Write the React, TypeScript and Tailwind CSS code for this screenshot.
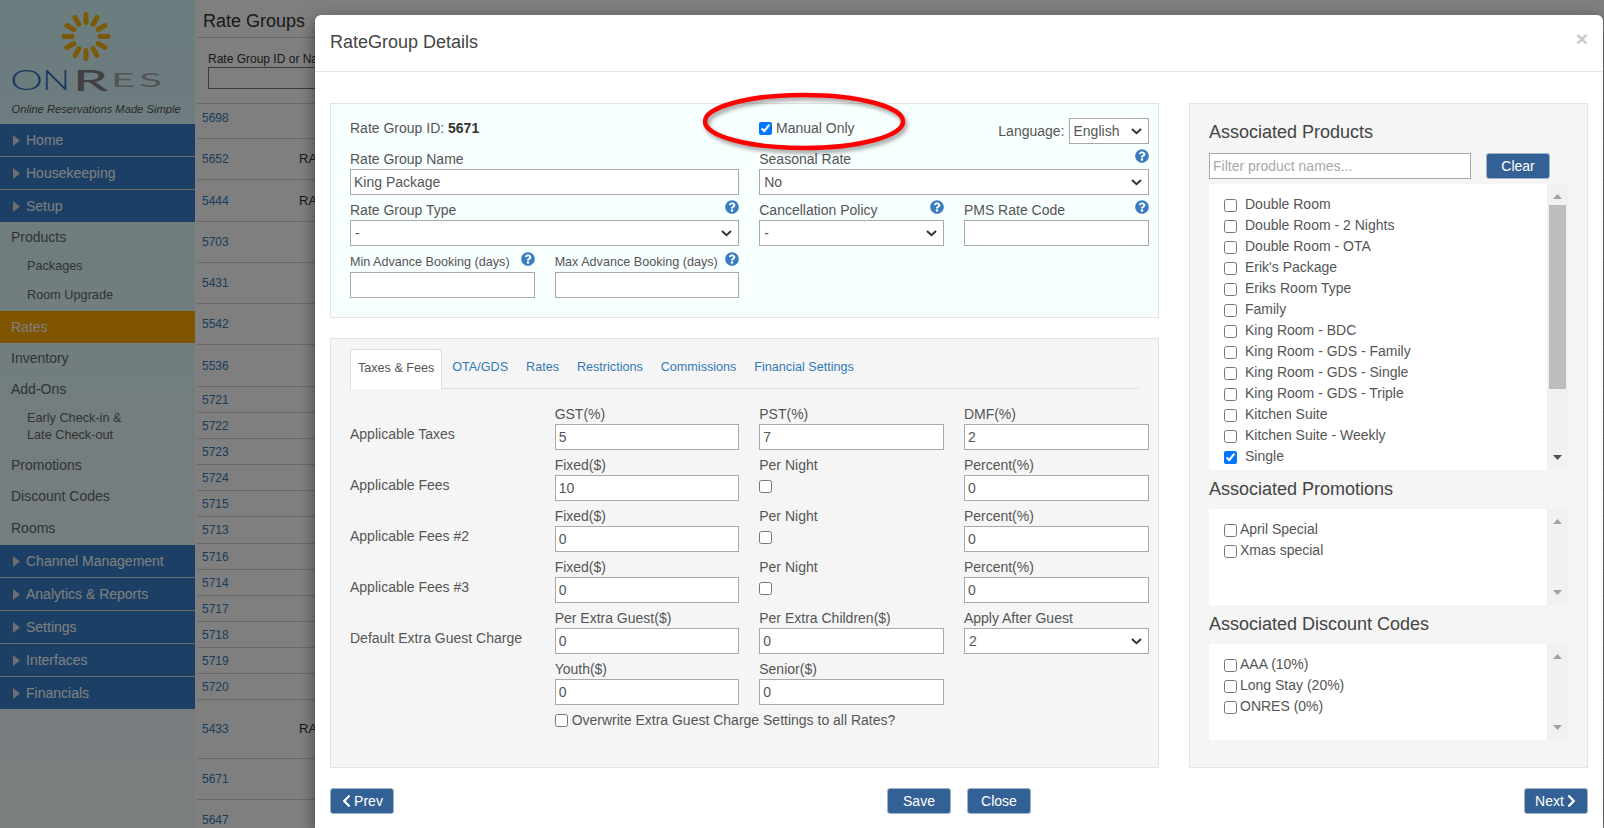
import React from "react";
import { FaChevronLeft, FaChevronRight, FaQuestionCircle } from "react-icons/fa";

const inputCls = "block h-[26px] border border-[#a9a9a9] bg-white px-[3px] text-[14px] text-[#555] outline-none";
const btnCls = "inline-flex h-[26px] w-[64px] items-center justify-center gap-[2px] rounded-[3px] border border-[#9fb2c7] bg-[#336195] text-[14px] text-white";

function Help() {
  return <FaQuestionCircle className="mb-[6px] h-[14px] w-[14px] shrink-0 text-[#3b7bbf]" />;
}

function Label({ text, help, small }: { text: string; help?: boolean; small?: boolean }) {
  return (
    <div className={`flex h-[25px] items-end justify-between whitespace-nowrap leading-[20px] ${small ? "text-[12.6px]" : ""}`}>
      <span>{text}</span>
      {help ? <Help /> : null}
    </div>
  );
}

function TextField({ label, value, help, small }: { label: string; value?: string; help?: boolean; small?: boolean }) {
  return (
    <div>
      <Label text={label} help={help} small={small} />
      <input className={`${inputCls} w-full`} defaultValue={value ?? ""} />
    </div>
  );
}

function NativeSelect({ value, options, width }: { value: string; options?: string[]; width: string }) {
  return (
    <div className={`relative ${width}`}>
      <select className="block h-[26px] w-full appearance-none border border-[#a9a9a9] bg-white pl-[4px] text-[14px] text-[#555] outline-none" defaultValue={value}>
        {(options ?? [value]).map((o) => (
          <option key={o}>{o}</option>
        ))}
      </select>
      <svg width="11" height="7" viewBox="0 0 11 7" className="pointer-events-none absolute right-[7px] top-[10px]">
        <polyline points="1,1 5.5,5.2 10,1" fill="none" stroke="#333" strokeWidth="2" />
      </svg>
    </div>
  );
}

function SelectField({ label, value, help, options }: { label: string; value: string; help?: boolean; options?: string[] }) {
  return (
    <div>
      <Label text={label} help={help} />
      <NativeSelect value={value} options={options} width="w-full" />
    </div>
  );
}

function CheckField({ label }: { label: string }) {
  return (
    <div>
      <Label text={label} />
      <div className="flex h-[26px] items-center pb-[3px]">
        <input type="checkbox" />
      </div>
    </div>
  );
}

function RowTitle({ text }: { text: string }) {
  return <div className="flex h-[51px] items-end pb-[6px] leading-[20px]">{text}</div>;
}

function Arrow({ up, dark }: { up?: boolean; dark?: boolean }) {
  return (
    <svg width="9" height="5" viewBox="0 0 9 5" className="shrink-0">
      <polygon points={up ? "4.5,0 9,5 0,5" : "0,0 9,0 4.5,5"} fill={dark ? "#505050" : "#a3a3a3"} />
    </svg>
  );
}

function ListBox({ items, height, gap, checked, thumb }: { items: string[]; height: string; gap: string; checked?: string; thumb?: boolean }) {
  return (
    <div className={`flex ${height}`}>
      <div className="flex-1 overflow-hidden bg-white pl-[15px] pt-[10px] text-[#555]">
        {items.map((it) => (
          <label key={it} className="flex h-[21px] items-center">
            <input type="checkbox" className="mt-[2px]" defaultChecked={it === checked} />
            <span className={gap}>{it}</span>
          </label>
        ))}
      </div>
      <div className="flex w-[21px] flex-col items-center bg-[#f1f1f1] py-[10px]">
        <Arrow up />
        {thumb ? <div className="mt-[6px] h-[184px] w-[17px] bg-[#bdbdbd]" /> : null}
        <div className="flex-1" />
        <Arrow dark={thumb} />
      </div>
    </div>
  );
}

function MenuBar({ text, last }: { text: string; last?: boolean }) {
  return (
    <div className={`flex items-center bg-[#367fcb] ${last ? "h-[32px]" : "h-[33px] border-b border-[#d8d8d8]"}`}>
      <svg width="7" height="11" viewBox="0 0 7 11" className="ml-[13px] mr-[6px]">
        <polygon points="0,0 7,5.5 0,11" fill="#dddddd" />
      </svg>
      <span className="text-white">{text}</span>
    </div>
  );
}

function Logo() {
  const rays = Array.from({ length: 12 }, (_, i) => i * 30);
  return (
    <svg width="195" height="124" viewBox="0 0 195 124" className="block">
      {rays.map((a) => (
        <line key={a} x1="86" y1="22.5" x2="86" y2="14.5" stroke="#f6b414" strokeWidth="5" strokeLinecap="round" transform={`rotate(${a} 86 36.5)`} />
      ))}
      <g fontFamily="Lato, 'Open Sans', sans-serif" fontWeight="300">
        <text x="10" y="90" fontSize="27" fill="#2f6fc0" textLength="33" lengthAdjust="spacingAndGlyphs">O</text>
        <text x="42" y="90" fontSize="27" fill="#2f6fc0" textLength="28" lengthAdjust="spacingAndGlyphs">N</text>
        <text x="73" y="90.5" fontSize="28" fontWeight="500" fill="#808088" textLength="35" lengthAdjust="spacingAndGlyphs">R</text>
        <text x="111" y="87" fontSize="19" fontWeight="400" fill="#a8a8b0" textLength="24" lengthAdjust="spacingAndGlyphs">E</text>
        <text x="139" y="87" fontSize="19" fontWeight="400" fill="#a8a8b0" textLength="23" lengthAdjust="spacingAndGlyphs">S</text>
      </g>
      <text x="11.5" y="113" fontSize="11.2" fontStyle="italic" fill="#555">Online Reservations Made Simple</text>
    </svg>
  );
}

function Sidebar() {
  const item = "flex items-center pl-[11px] text-[#666]";
  const sub = "flex items-center pl-[27px] text-[#666]";
  return (
    <div className="h-[828px] w-[195px] shrink-0 bg-linear-to-b from-[#d8faff] to-[#f4fdff] text-[14px]">
      <Logo />
      <MenuBar text="Home" />
      <MenuBar text="Housekeeping" />
      <MenuBar text="Setup" last />
      <div className={`${item} h-[31px]`}>Products</div>
      <div className={`${sub} h-[27px] text-[12.7px]`}>Packages</div>
      <div className={`${sub} h-[31px] text-[12.7px]`}>Room Upgrade</div>
      <div className="flex h-[32px] items-center bg-[#ffaa00] pl-[11px] text-white">Rates</div>
      <div className={`${item} h-[31px]`}>Inventory</div>
      <div className={`${item} h-[31px]`}>Add-Ons</div>
      <div className={`${sub} h-[45px] pb-[1px] text-[12.7px] leading-[17px]`}>
        <span>
          Early Check-in &amp;
          <br />
          Late Check-out
        </span>
      </div>
      <div className={`${item} h-[31px]`}>Promotions</div>
      <div className={`${item} h-[31px]`}>Discount Codes</div>
      <div className={`${item} h-[33px]`}>Rooms</div>
      <MenuBar text="Channel Management" />
      <MenuBar text="Analytics & Reports" />
      <MenuBar text="Settings" />
      <MenuBar text="Interfaces" />
      <MenuBar text="Financials" last />
    </div>
  );
}

const tableRows: { id: string; h: string; ra?: boolean; top?: boolean }[] = [
  { id: "5698", h: "h-[35px]", top: true },
  { id: "5652", h: "h-[41px]", ra: true },
  { id: "5444", h: "h-[42px]", ra: true },
  { id: "5703", h: "h-[41px]" },
  { id: "5431", h: "h-[41px]" },
  { id: "5542", h: "h-[41px]" },
  { id: "5536", h: "h-[42px]" },
  { id: "5721", h: "h-[26px]" },
  { id: "5722", h: "h-[26px]" },
  { id: "5723", h: "h-[26px]" },
  { id: "5724", h: "h-[26px]" },
  { id: "5715", h: "h-[26px]" },
  { id: "5713", h: "h-[27px]" },
  { id: "5716", h: "h-[26px]" },
  { id: "5714", h: "h-[26px]" },
  { id: "5717", h: "h-[26px]" },
  { id: "5718", h: "h-[26px]" },
  { id: "5719", h: "h-[26px]" },
  { id: "5720", h: "h-[26px]" },
  { id: "5433", h: "h-[59px]", ra: true },
  { id: "5671", h: "h-[41px]" },
  { id: "5647", h: "h-[41px]" },
];

function MainTable() {
  return (
    <div className="ml-[2px] min-w-0 flex-1 bg-white text-[12px] text-[#333]">
      <div className="flex h-[38px] items-center border-b border-[#d4d4d4] pl-[6px] pt-[5px] text-[18px]">Rate Groups</div>
      <div className="h-[66px] border-b border-[#d4d4d4] pl-[11px] pt-[13px]">
        <div className="leading-[16px]">Rate Group ID or Name</div>
        <div className="h-[22px] w-[200px] border border-[#767676]" />
      </div>
      {tableRows.map((r) => (
        <div key={r.id} className={`flex ${r.h} ${r.top ? "pb-[7px]" : ""} items-center border-b border-[#d4d4d4] pl-[5px]`}>
          <span className="w-[97px] text-[#337ab7]">{r.id}</span>
          {r.ra ? <span className="text-[13px]">RACK</span> : null}
        </div>
      ))}
    </div>
  );
}

const products = [
  "Double Room",
  "Double Room - 2 Nights",
  "Double Room - OTA",
  "Erik's Package",
  "Eriks Room Type",
  "Family",
  "King Room - BDC",
  "King Room - GDS - Family",
  "King Room - GDS - Single",
  "King Room - GDS - Triple",
  "Kitchen Suite",
  "Kitchen Suite - Weekly",
  "Single",
];

function TopPanel() {
  return (
    <div className="h-[215px] border border-[#e3e3e3] bg-[#f8ffff] pl-[19px] pr-[9.5px] pt-[14px]">
      <div className="flex h-[26px]">
        <div className="flex w-[409px] items-center pb-[6px]">
          <span>
            Rate Group ID: <b className="text-[#333]">5671</b>
          </span>
        </div>
        <label className="flex items-center gap-[4px] pb-[6px]">
          <input type="checkbox" defaultChecked />
          <span>Manual Only</span>
        </label>
        <div className="flex flex-1 items-start justify-end gap-[4px]">
          <span className="leading-[26px]">Language:</span>
          <NativeSelect value="English" width="w-[80px]" />
        </div>
      </div>
      <div className="grid grid-cols-4 gap-x-[20px]">
        <div className="col-span-2">
          <TextField label="Rate Group Name" value="King Package" />
        </div>
        <div className="col-span-2">
          <SelectField label="Seasonal Rate" value="No" help />
        </div>
        <div className="col-span-2">
          <SelectField label="Rate Group Type" value="-" help />
        </div>
        <SelectField label="Cancellation Policy" value="-" help />
        <TextField label="PMS Rate Code" help />
        <div className="mt-px">
          <TextField label="Min Advance Booking (days)" help small />
        </div>
        <div className="mt-px">
          <TextField label="Max Advance Booking (days)" help small />
        </div>
      </div>
    </div>
  );
}

function Tabs() {
  const tabs = ["OTA/GDS", "Rates", "Restrictions", "Commissions", "Financial Settings"];
  return (
    <div className="mr-[10px] flex h-[40px] border-b border-[#ddd] text-[12.6px]">
      <div className="flex h-[40px] items-center rounded-t-[4px] border border-b-0 border-[#ddd] bg-white px-[7px] pb-[3px] text-[#555]">Taxes &amp; Fees</div>
      {tabs.map((t) => (
        <div key={t} className="ml-[2px] flex h-[39px] items-center px-[8px] pb-[3px] text-[#337ab7]">
          {t}
        </div>
      ))}
    </div>
  );
}

function BottomPanel() {
  return (
    <div className="mt-[20px] h-[430px] border border-[#e3e3e3] bg-[#f5f5f5] pl-[19px] pr-[9.5px] pt-[10px]">
      <Tabs />
      <div className="mt-[10px] grid grid-cols-4 gap-x-[20px]">
        <RowTitle text="Applicable Taxes" />
        <TextField label="GST(%)" value="5" />
        <TextField label="PST(%)" value="7" />
        <TextField label="DMF(%)" value="2" />

        <RowTitle text="Applicable Fees" />
        <TextField label="Fixed($)" value="10" />
        <CheckField label="Per Night" />
        <TextField label="Percent(%)" value="0" />

        <RowTitle text="Applicable Fees #2" />
        <TextField label="Fixed($)" value="0" />
        <CheckField label="Per Night" />
        <TextField label="Percent(%)" value="0" />

        <RowTitle text="Applicable Fees #3" />
        <TextField label="Fixed($)" value="0" />
        <CheckField label="Per Night" />
        <TextField label="Percent(%)" value="0" />

        <RowTitle text="Default Extra Guest Charge" />
        <TextField label="Per Extra Guest($)" value="0" />
        <TextField label="Per Extra Children($)" value="0" />
        <SelectField label="Apply After Guest" value="2" />

        <div />
        <TextField label="Youth($)" value="0" />
        <TextField label="Senior($)" value="0" />
        <div />

        <div />
        <label className="col-span-3 mt-[5px] flex items-center gap-[4px] leading-[20px]">
          <input type="checkbox" />
          <span>Overwrite Extra Guest Charge Settings to all Rates?</span>
        </label>
      </div>
    </div>
  );
}

function RightPanel() {
  return (
    <div className="h-[665px] w-[399px] shrink-0 border border-[#e3e3e3] bg-[#f5f5f5] pl-[19px] pr-[19px] pt-[18px]">
      <div className="text-[18px] leading-[20px] text-[#444]">Associated Products</div>
      <div className="mt-[11px] flex">
        <input className={`${inputCls} w-[262px] placeholder:text-[#a9a9a9]`} placeholder="Filter product names..." />
        <button className="ml-[15px] inline-flex h-[26px] w-[64px] items-center justify-center rounded-[3px] border border-[#9fb2c7] bg-[#336195] text-[14px] text-white">Clear</button>
      </div>
      <div className="mt-[5px]">
        <ListBox items={products} height="h-[286px]" gap="ml-[8px]" checked="Single" thumb />
      </div>
      <div className="mt-[9px] text-[18px] leading-[20px] text-[#444]">Associated Promotions</div>
      <div className="mt-[10px]">
        <ListBox items={["April Special", "Xmas special"]} height="h-[96px]" gap="ml-[3px]" />
      </div>
      <div className="mt-[9px] text-[18px] leading-[20px] text-[#444]">Associated Discount Codes</div>
      <div className="mt-[10px]">
        <ListBox items={["AAA (10%)", "Long Stay (20%)", "ONRES (0%)"]} height="h-[96px]" gap="ml-[3px]" />
      </div>
    </div>
  );
}

function Modal() {
  return (
    <div className="absolute left-[315px] top-[15px] h-[813px] w-[1288px] rounded-t-[6px] bg-white text-[14px] text-[#555] shadow-[0_5px_15px_rgba(0,0,0,0.5)]">
      <div className="flex h-[57px] items-start justify-between border-b border-[#e5e5e5] pl-[15px] pr-[15px] pt-[16px]">
        <div className="pt-px text-[18px] leading-[20px] text-[#444]">RateGroup Details</div>
        <span className="text-[21px] font-bold leading-[16px] text-[#c8c8c8]">×</span>
      </div>
      <div className="flex gap-[30px] pl-[15px] pt-[31px]">
        <div className="w-[829px] shrink-0">
          <TopPanel />
          <BottomPanel />
        </div>
        <RightPanel />
      </div>
      <div className="mr-[15px] mt-[20px] flex items-center justify-between pl-[15px]">
        <button className={btnCls}>
          <FaChevronLeft className="h-[14px] w-[11px]" />
          Prev
        </button>
        <div className="flex gap-[16px]">
          <button className={btnCls}>Save</button>
          <button className={btnCls}>Close</button>
        </div>
        <button className={btnCls}>
          Next
          <FaChevronRight className="h-[14px] w-[11px]" />
        </button>
      </div>
    </div>
  );
}

export default function App() {
  return (
    <div className="relative flex h-[828px] w-[1604px] overflow-hidden bg-white font-['Liberation_Sans',Arial,sans-serif]">
      <Sidebar />
      <MainTable />
      <div className="absolute inset-0 bg-black/50" />
      <Modal />
      <svg width="220" height="76" viewBox="0 0 220 76" className="absolute left-[694px] top-[84px] drop-shadow-[2px_3px_2px_rgba(0,0,0,0.4)]">
        <ellipse cx="110" cy="37.5" rx="99" ry="26.5" fill="none" stroke="#ff0000" strokeWidth="4.5" />
      </svg>
    </div>
  );
}
